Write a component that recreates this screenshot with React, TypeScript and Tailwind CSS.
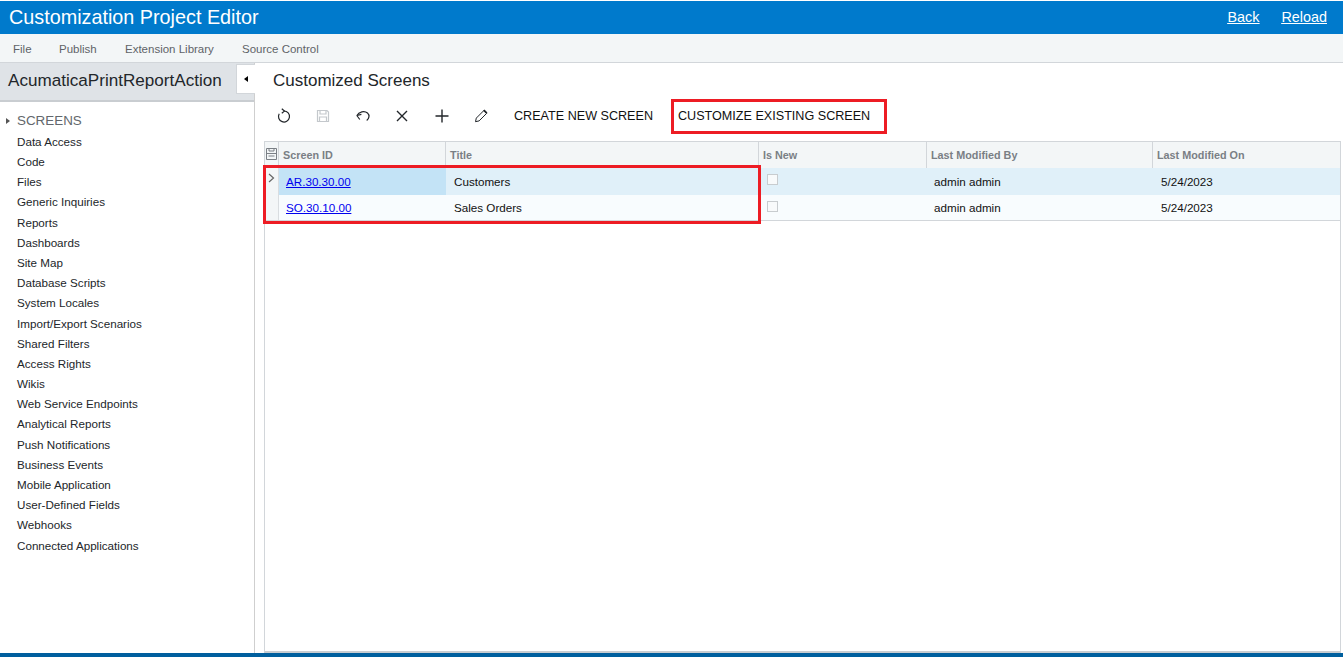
const menuItems = [
  { name: "File", className: "w-[46px]" },
  { name: "Publish", className: "w-[66px]" },
  { name: "Extension Library", className: "w-[117px]" },
  { name: "Source Control", className: "" },
];

const treeItems = [
  "Data Access",
  "Code",
  "Files",
  "Generic Inquiries",
  "Reports",
  "Dashboards",
  "Site Map",
  "Database Scripts",
  "System Locales",
  "Import/Export Scenarios",
  "Shared Filters",
  "Access Rights",
  "Wikis",
  "Web Service Endpoints",
  "Analytical Reports",
  "Push Notifications",
  "Business Events",
  "Mobile Application",
  "User-Defined Fields",
  "Webhooks",
  "Connected Applications",
];

const rows = [
  { id: "AR.30.30.00", title: "Customers", selected: true },
  { id: "SO.30.10.00", title: "Sales Orders", selected: false },
];

const headerCell = "flex items-center border-r border-[#d2d6da] bg-[#f3f6f7] pl-[4px] text-[10.8px] font-bold text-[#7a7f85]";

function ToolIcon({ children }: { children: React.ReactNode }) {
  return (
    <button className="flex h-[37px] w-[39.5px] items-center justify-center pb-[2px]">
      <svg width="16" height="16" viewBox="0 0 16 16" fill="none" stroke="currentColor" strokeWidth="1.2">
        {children}
      </svg>
    </button>
  );
}

export default function App() {
  return (
    <div className="flex h-[657px] w-[1343px] flex-col overflow-hidden bg-white font-['Liberation_Sans',Arial,sans-serif]">
      {/* Title bar */}
      <header className="mt-px flex h-[33px] items-center justify-between bg-[#007acc] pl-[9px] pr-4 text-white">
        <h1 className="text-[19.8px] leading-none">Customization Project Editor</h1>
        <div className="flex gap-[22px] text-[14.4px] underline">
          <a href="#">Back</a>
          <a href="#">Reload</a>
        </div>
      </header>

      {/* Menu */}
      <nav className="flex h-[29px] items-center border-b border-[#d2d6da] bg-[#f3f6f7] pl-[13px] pt-[3px] text-[11.5px] text-[#5f6368]">
        {menuItems.map((item) => (
          <span key={item.name} className={item.className}>
            {item.name}
          </span>
        ))}
      </nav>

      <div className="flex min-h-0 flex-1">
        {/* Sidebar */}
        <aside className="w-[255px] shrink-0 border-r border-[#cfcfcf]">
          <div className="relative flex h-[39px] items-center border-b-2 border-[#c9cdd1] bg-[#dfe3e7] pb-[2px] pl-[8px] text-[17.1px] text-[#22262a]">
            AcumaticaPrintReportAction
            <button className="absolute right-[-1px] top-[1px] flex h-[30px] w-[19px] items-center justify-center border-y border-l border-[#d2d6da] bg-white">
              <span className="h-0 w-0 border-y-[3.5px] border-r-[4px] border-y-transparent border-r-black" />
            </button>
          </div>
          <div className="pl-[17px] pt-[8px] text-[11.65px] text-[#22262a]">
            <div className="relative flex h-[21.5px] items-center text-[13.4px] text-[#62676c]">
              <span className="absolute left-[-11px] top-[8px] h-0 w-0 border-y-[3.5px] border-l-[4px] border-y-transparent border-l-[#555]" />
              SCREENS
            </div>
            {treeItems.map((item) => (
              <div key={item} className="flex h-[20.2px] items-center">
                {item}
              </div>
            ))}
          </div>
        </aside>

        {/* Main */}
        <main className="relative flex min-w-0 flex-1 flex-col pl-[9px] pr-[2px]">
          <h2 className="h-[35px] pl-[9px] pt-[7px] text-[17px] leading-[22px] text-[#22262a]">Customized Screens</h2>

          {/* Toolbar */}
          <div className="mb-[6px] flex h-[37px] items-center text-[#22262a]">
            <div className="flex">
              <ToolIcon>
                <path d="M8 3a5.5 5.5 0 1 1-4.8 2.8" />
                <path d="M5.8 .8l2.6 2.3-2.6 2.2" />
              </ToolIcon>
              <span className="text-[#c4c8cc]">
                <ToolIcon>
                  <path d="M2.5 2.5h9.5l1.5 1.5v9.5h-11z" />
                  <path d="M5 2.5v3.5h6v-3.5M4.5 13.5v-4.5h7v4.5" />
                </ToolIcon>
              </span>
              <ToolIcon>
                <path d="M1.8 7.5l3 4M1.8 7.5l4.6-1.2" />
                <path d="M2 7.5c1.8-4 7.5-5 10.5-2.5 2.5 2.2 1.6 5.8-.8 7.5" />
              </ToolIcon>
              <ToolIcon>
                <path d="M3 3l10 10M13 3L3 13" strokeWidth="1.4" />
              </ToolIcon>
              <ToolIcon>
                <path d="M8 1.5v13M1.5 8h13" strokeWidth="1.4" />
              </ToolIcon>
              <ToolIcon>
                <path d="M2.5 13.7l.8-3.6 7.6-7.6 2.8 2.8-7.6 7.6z" strokeWidth="1" />
                <path d="M10.8 2.2l3 3" strokeWidth="1.8" />
              </ToolIcon>
            </div>
            <button className="ml-[13px] whitespace-nowrap text-[12.6px] text-[#111]">CREATE NEW SCREEN</button>
            <button className="ml-[18px] flex h-[35px] w-[216px] items-center whitespace-nowrap border-[3px] border-[#ed1c24] pl-[4px] text-[12.6px] text-[#111]">
              CUSTOMIZE EXISTING SCREEN
            </button>
          </div>

          {/* Grid */}
          <div className="flex-1 border-x border-t border-b-2 border-x-[#d2d6da] border-t-[#d2d6da] border-b-[#c9cdd1]">
            <div className="grid grid-cols-[14px_167px_313px_168px_226px_187px] grid-rows-[26px_27px_25px] border-b border-[#d2d6da] text-[11.65px] text-[#111]">
              <div className={headerCell + " justify-center !pl-0"}>
                <svg width="11" height="12" viewBox="0 0 11 12" fill="none" stroke="#7a7f85" strokeWidth="1" className="mb-[3px]">
                  <path d="M.5.5h10v11h-10zM.5 5.5h10M3 .5v2.5h5v-2.5" />
                  <path d="M2.5 8h6" />
                </svg>
              </div>
              <div className={headerCell}>Screen ID</div>
              <div className={headerCell}>Title</div>
              <div className={headerCell}>Is New</div>
              <div className={headerCell}>Last Modified By</div>
              <div className={headerCell + " border-r-0"}>Last Modified On</div>

              {rows.map((row) => {
                const rowBg = row.selected ? "bg-[#e0f0f9]" : "bg-[#f8fcfe]";
                return (
                  <div key={row.id} className="contents">
                    <div className="flex items-start border-r border-[#d9dde0] bg-[#f3f6f7] pl-[3px] pt-[5px]">
                      {row.selected && (
                        <svg width="7" height="10" viewBox="0 0 7 10" fill="none" stroke="#666" strokeWidth="1.2">
                          <path d="M1 1l4.5 4L1 9" />
                        </svg>
                      )}
                    </div>
                    <div className={"flex items-center pl-[7px] " + (row.selected ? "bg-[#c3e3f6]" : rowBg)}>
                      <a href="#" className="text-[#0000ee] underline">
                        {row.id}
                      </a>
                    </div>
                    <div className={"flex items-center pl-[8px] " + rowBg}>{row.title}</div>
                    <div className={"flex items-start pl-[8px] pt-[6px] " + rowBg}>
                      <span className="h-[11px] w-[11px] border-[1.5px] border-[#c8cccf] bg-[#f8fafb]" />
                    </div>
                    <div className={"flex items-center pl-[7px] " + rowBg}>admin admin</div>
                    <div className={"flex items-center pl-[8px] " + rowBg}>5/24/2023</div>
                  </div>
                );
              })}
            </div>
          </div>

          {/* Highlight over the two rows */}
          <div className="pointer-events-none absolute left-[8px] top-[102px] h-[59px] w-[498px] border-[3px] border-[#ed1c24]" />
        </main>
      </div>

      <div className="h-[4px] shrink-0 bg-[#005f9e]" />
    </div>
  );
}
